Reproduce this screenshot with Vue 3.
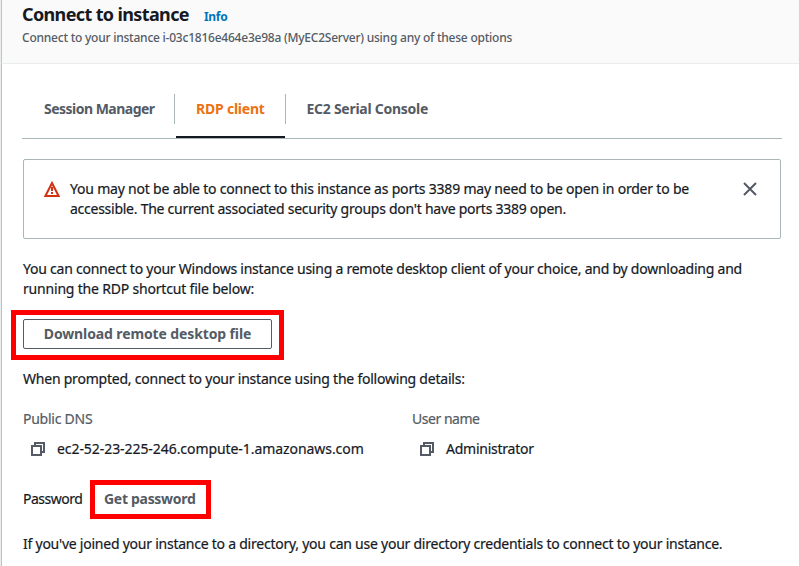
<script setup>
const tabs = [
  { label: 'Session Manager', cls: 'session' },
  { label: 'RDP client', cls: 'rdp', active: true },
  { label: 'EC2 Serial Console', cls: 'serial' },
]
const details = [
  { label: 'Public DNS', value: 'ec2-52-23-225-246.compute-1.amazonaws.com', cls: 'dns' },
  { label: 'User name', value: 'Administrator', cls: 'user' },
]
</script>

<template>
  <main class="page">
    <header class="header">
      <div class="heading">
        <h1>Connect to instance</h1>
        <a class="info">Info</a>
      </div>
      <p class="sub">Connect to your instance i-03c1816e464e3e98a (MyEC2Server) using any of these options</p>
    </header>

    <section class="body">
      <nav class="tabs">
        <div v-for="tab in tabs" :key="tab.label" class="tab" :class="[tab.cls, { active: tab.active }]">
          <span>{{ tab.label }}</span>
        </div>
      </nav>

      <div class="alert">
        <svg class="warn" width="16" height="16" viewBox="0 0 16 16">
          <path d="M8 2 14.6 15H1.4Z" fill="none" stroke="#d13212" stroke-width="2" />
          <path d="M8 6v4M8 11v2" fill="none" stroke="#d13212" stroke-width="2" />
        </svg>
        <p class="alert-text">
          <span class="a1">You may not be able to connect to this instance as ports 3389 may need to be open in order to be</span><br>
          <span class="a2">accessible. The current associated security groups don't have ports 3389 open.</span>
        </p>
        <svg class="close" width="14" height="14" viewBox="0 0 14 14">
          <path d="M1 1 13 13M13 1 1 13" fill="none" stroke="#545b64" stroke-width="2" />
        </svg>
      </div>

      <p class="intro">
        <span class="p1">You can connect to your Windows instance using a remote desktop client of your choice, and by downloading and</span><br>
        <span class="p2">running the RDP shortcut file below:</span>
      </p>

      <div class="mark download-mark">
        <button class="download">Download remote desktop file</button>
      </div>

      <p class="prompt">When prompted, connect to your instance using the following details:</p>

      <div class="details">
        <div v-for="d in details" :key="d.label" :class="d.cls">
          <div class="label">{{ d.label }}</div>
          <div class="value">
            <svg width="14" height="14" viewBox="0 0 14 14">
              <path d="M1 4h9v9H1Z" fill="none" stroke="#545b64" stroke-width="2" />
              <path d="M4 4V1h9v9h-3" fill="none" stroke="#545b64" stroke-width="2" />
            </svg>
            <span>{{ d.value }}</span>
          </div>
        </div>
      </div>

      <div class="password">
        <span class="pw-label">Password</span>
        <div class="mark pw-mark"><button class="get">Get password</button></div>
      </div>

      <p class="note">If you've joined your instance to a directory, you can use your directory credentials to connect to your instance.</p>
    </section>
  </main>
</template>

<style>
body { margin: 0; background: #fff; overflow: hidden; }
</style>

<style scoped>
* { box-sizing: border-box; }
p, h1 { margin: 0; white-space: nowrap; }
button { font: inherit; padding: 0; margin: 0; background: #fff; color: #545b64; font-weight: 700; border: 0; white-space: nowrap; }
svg { display: block; flex: none; }
.page {
  width: 799px;
  height: 566px;
  overflow: hidden;
  border-left: 1px solid #eaeded;
  background: #fff;
  color: #16191f;
  font: 400 14px/20px "Noto Sans", sans-serif;
}
.alert-text, .intro, .prompt, .details, .pw-label, .note { -webkit-text-stroke: 0.2px currentColor; }
.header, .body { border-left: 1px solid #bcc5c5; }
.header { height: 64px; padding: 2px 0 0 20px; background: #fafafa; border-bottom: 1px solid #eaeded; }
.heading { display: flex; align-items: baseline; gap: 15px; height: 26px; }
h1 { font-size: 18px; line-height: 24px; font-weight: 700; letter-spacing: -0.63px; }
.info { color: #0073bb; font-size: 12px; font-weight: 700; letter-spacing: -0.3px; }
.sub { font-size: 12px; line-height: 20px; font-weight: 500; color: #545b64; letter-spacing: -0.232px; }
.body { height: 502px; padding: 30px 18px 0 21px; }
.tabs { display: flex; margin: 0 -1px; height: 45px; border-bottom: 1px solid #aab7b8; }
.tab { height: 30px; line-height: 30px; font-weight: 700; color: #545b64; border-right: 1px solid #aab7b8; white-space: nowrap; }
.session { width: 153px; padding-left: 22px; letter-spacing: -0.52px; }
.rdp { width: 111px; position: relative; padding-left: 21px; letter-spacing: -0.22px; }
.rdp.active { color: #ec7211; }
.rdp.active::after { content: ""; position: absolute; left: 1px; right: 0; bottom: -14px; height: 2px; background: #16191f; }
.serial { border-right: 0; padding-left: 20.5px; letter-spacing: -0.27px; }
.alert { display: flex; height: 80px; margin-top: 20px; padding: 19px 23px 0 20px; border: 1px solid #aab7b8; border-radius: 2px; }
.warn { margin-top: 2px; }
.alert-text { flex: 1; margin-left: 10px; }
.a1 { letter-spacing: -0.203px; }
.a2 { letter-spacing: -0.257px; }
.close { margin-top: 3px; }
.intro { margin-top: 20px; }
.p1 { letter-spacing: -0.238px; }
.p2 { letter-spacing: -0.19px; }
.mark { border: 5px solid #f00; }
.download-mark { display: flex; width: 273px; height: 50px; margin: 11px 0 0 -12px; padding: 4px 7px; }
.download { width: 249px; height: 30px; border: 1px solid #545b64; border-radius: 2px; letter-spacing: -0.12px; }
.prompt { margin-top: 9px; letter-spacing: -0.225px; }
.details { display: flex; margin-top: 20px; }
.dns { width: 389px; }
.label { color: #545b64; }
.dns .label { letter-spacing: -0.25px; }
.user .label { letter-spacing: -0.47px; }
.value { display: flex; align-items: center; gap: 12px; margin-top: 10px; padding-left: 8px; white-space: nowrap; }
.dns .value { letter-spacing: -0.065px; }
.user .value { letter-spacing: -0.25px; }
.password { display: flex; align-items: flex-start; height: 39px; margin-top: 21px; }
.pw-label { width: 67px; padding-top: 9px; letter-spacing: -0.5px; }
.pw-mark { width: 121px; height: 39px; padding-left: 9px; }
.get { height: 28px; letter-spacing: -0.3px; }
.note { margin-top: 15px; letter-spacing: -0.24px; }
</style>
